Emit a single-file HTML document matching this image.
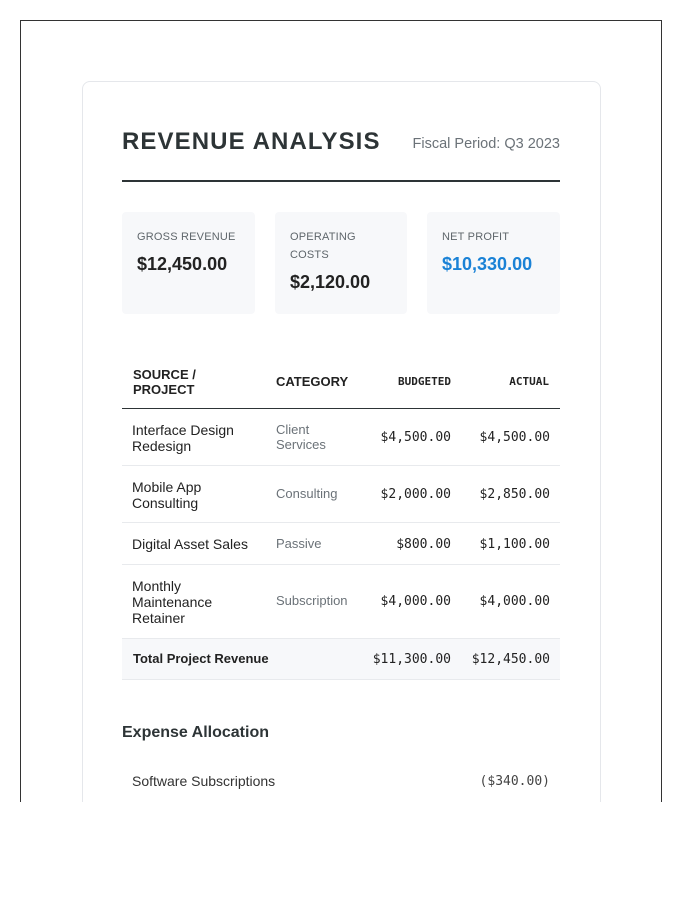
<!DOCTYPE html>
<html><head><style>
*{margin:0;padding:0;box-sizing:border-box}
body{width:700px;height:900px;background:#fff;font-family:"Liberation Sans",Arial,sans-serif;color:#2d3436;position:relative;overflow:hidden}
.frame{position:absolute;left:20px;top:20px;width:642px;height:782px;border:1px solid #333;border-bottom:none;overflow:hidden}
.card{position:absolute;left:61px;top:60px;width:519px;height:800px;border:1px solid #e5e7eb;border-radius:8px;background:#fff}
.a{position:absolute}
.title{left:101px;top:107px;font-size:24px;font-weight:bold;letter-spacing:1.1px;color:#2d3436}
.period{right:101px;top:115px;font-size:14.5px;color:#6b7278}
.rule{left:101px;top:159px;width:438px;height:2px;background:#2d3436}
.box{top:191px;height:102px;background:#f7f8fa;border-radius:4px;padding:15px}
.lbl{font-size:11px;color:#5f666b;line-height:18px;letter-spacing:.2px;margin-top:1px}
.val{font-size:18px;font-weight:bold;margin-top:8px;color:#222}
.th{font-size:13px;font-weight:bold;color:#222;line-height:15px}
.mh{font-family:"DejaVu Sans Mono",monospace;font-size:11px;font-weight:bold;color:#222}
.td{font-size:14px;line-height:16px;color:#222}
.cat{font-size:13px;line-height:15px;color:#6b7278}
.num{font-family:"DejaVu Sans Mono","Liberation Mono",monospace;font-size:13px;color:#222}
.hl{left:101px;width:438px;height:1px;background:#e8eaed}
</style></head><body>
<div class="frame">
<div class="card"></div>
<div class="a title">REVENUE ANALYSIS</div>
<div class="a period">Fiscal Period: Q3 2023</div>
<div class="a rule"></div>
<div class="a box" style="left:101px;width:133px"><div class="lbl">GROSS REVENUE</div><div class="val">$12,450.00</div></div>
<div class="a box" style="left:254px;width:132px"><div class="lbl">OPERATING<br>COSTS</div><div class="val">$2,120.00</div></div>
<div class="a box" style="left:406px;width:133px"><div class="lbl">NET PROFIT</div><div class="val" style="color:#1a82d6">$10,330.00</div></div>

<div class="a th" style="left:112px;top:346px">SOURCE /<br>PROJECT</div>
<div class="a th" style="left:255px;top:353px">CATEGORY</div>
<div class="a mh" style="right:210px;top:354px">BUDGETED</div>
<div class="a mh" style="right:112px;top:354px">ACTUAL</div>
<div class="a" style="left:101px;top:387px;width:438px;height:1px;background:#2d3436"></div>

<div class="a td" style="left:111px;top:401px">Interface Design<br>Redesign</div>
<div class="a cat" style="left:255px;top:401px">Client<br>Services</div>
<div class="a num" style="right:210px;top:409px">$4,500.00</div>
<div class="a num" style="right:111px;top:409px">$4,500.00</div>
<div class="a hl" style="top:444px"></div>

<div class="a td" style="left:111px;top:458px">Mobile App<br>Consulting</div>
<div class="a cat" style="left:255px;top:465px">Consulting</div>
<div class="a num" style="right:210px;top:466px">$2,000.00</div>
<div class="a num" style="right:111px;top:466px">$2,850.00</div>
<div class="a hl" style="top:501px"></div>

<div class="a td" style="left:111px;top:515px">Digital Asset Sales</div>
<div class="a cat" style="left:255px;top:515px">Passive</div>
<div class="a num" style="right:210px;top:516px">$800.00</div>
<div class="a num" style="right:111px;top:516px">$1,100.00</div>
<div class="a hl" style="top:543px"></div>

<div class="a td" style="left:111px;top:557px">Monthly<br>Maintenance<br>Retainer</div>
<div class="a cat" style="left:255px;top:572px">Subscription</div>
<div class="a num" style="right:210px;top:573px">$4,000.00</div>
<div class="a num" style="right:111px;top:573px">$4,000.00</div>
<div class="a" style="left:101px;top:617px;width:438px;height:42px;background:#f7f8fa;border-top:1px solid #e8eaed;border-bottom:1px solid #e8eaed"></div>
<div class="a" style="left:112px;top:630px;font-size:13px;font-weight:bold;color:#222">Total Project Revenue</div>
<div class="a num" style="right:210px;top:631px">$11,300.00</div>
<div class="a num" style="right:111px;top:631px">$12,450.00</div>

<div class="a" style="left:101px;top:703px;font-size:16px;font-weight:bold;color:#2d3436">Expense Allocation</div>
<div class="a td" style="left:111px;top:752px;font-size:14px;color:#333">Software Subscriptions</div>
<div class="a num" style="right:111px;top:753px;color:#444">($340.00)</div>
</div>
</body></html>
